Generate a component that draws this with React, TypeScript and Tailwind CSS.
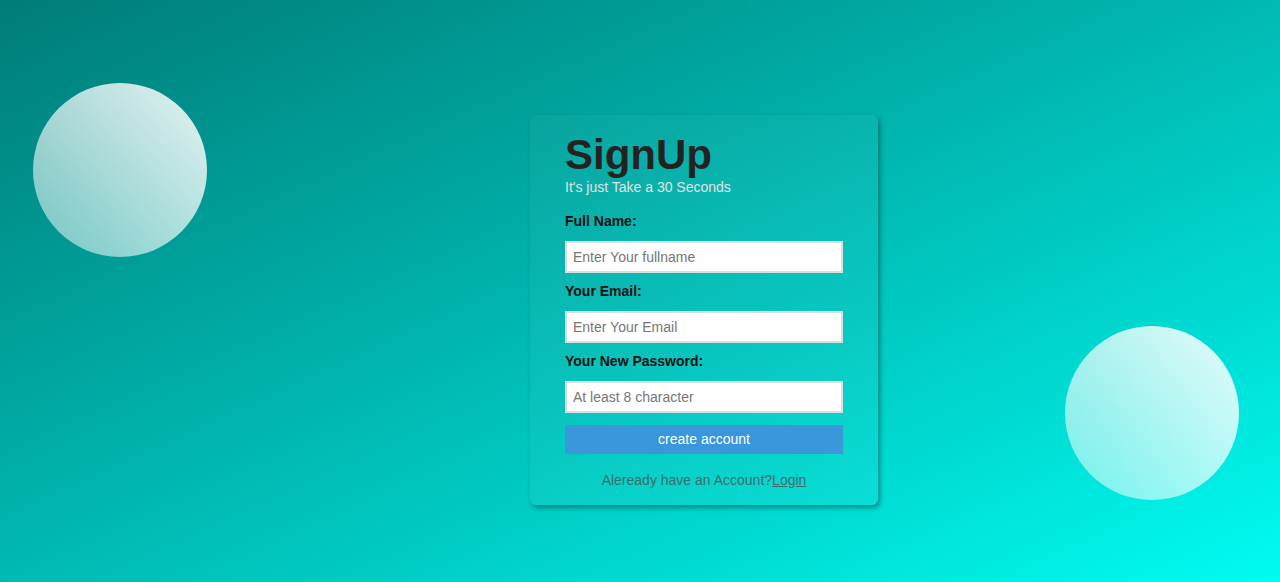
import { useState } from 'react';

export default function App() {
  const [form, setForm] = useState({ name: '', email: '', password: '' });

  const fields = [
    { key: 'name', label: 'Full Name:', type: 'text', placeholder: 'Enter Your fullname' },
    { key: 'email', label: 'Your Email:', type: 'email', placeholder: 'Enter Your Email' },
    { key: 'password', label: 'Your New Password:', type: 'password', placeholder: 'At least 8 character' },
  ] as const;

  return (
    <div className="h-screen w-full overflow-hidden bg-linear-to-br from-[#007c78] to-[#00fcf2] font-['Liberation_Sans',Arial,sans-serif]">
      <div className="flex items-start">
        <div className="ml-[33px] mt-[83px] h-[174px] w-[174px] shrink-0 rounded-full bg-linear-to-bl from-white/90 to-white/45" />

        <div className="ml-[323px] mt-[115px] w-[348px] shrink-0 rounded-md bg-white/[0.03] px-[35px] pt-[19px] pb-[15px] shadow-[2px_3px_5px_rgba(0,0,0,0.35)]">
          <h1 className="text-[42px] font-bold leading-none text-[#222]">SignUp</h1>
          <p className="mt-[3px] text-[14px] leading-4 text-[#e2e2e2]">It's just Take a 30 Seconds</p>

          <form className="mt-[16px] flex flex-col" onSubmit={(e) => e.preventDefault()}>
            {fields.map((f) => (
              <div key={f.key} className="mb-[8px]">
                <label className="block text-[14px] font-bold leading-5 text-[#111]">{f.label}</label>
                <input
                  type={f.type}
                  placeholder={f.placeholder}
                  value={form[f.key]}
                  onChange={(e) => setForm({ ...form, [f.key]: e.target.value })}
                  className="mt-[10px] block h-[32px] w-full border-2 border-[#dadfe0] bg-white px-[6px] text-[14px] text-[#222] outline-none placeholder:text-[#767676]"
                />
              </div>
            ))}
            <button
              type="submit"
              className="mt-[4px] block h-[29px] w-full bg-[#3997da] text-[14px] text-white"
            >
              create account
            </button>
          </form>

          <p className="mt-[16px] text-center text-[14px] leading-5 text-[#3a6f70]">
            Aleready have an Account?<a href="#" className="underline">Login</a>
          </p>
        </div>

        <div className="ml-[187px] mt-[326px] h-[174px] w-[174px] shrink-0 rounded-full bg-linear-to-bl from-white/90 to-white/45" />
      </div>
    </div>
  );
}
